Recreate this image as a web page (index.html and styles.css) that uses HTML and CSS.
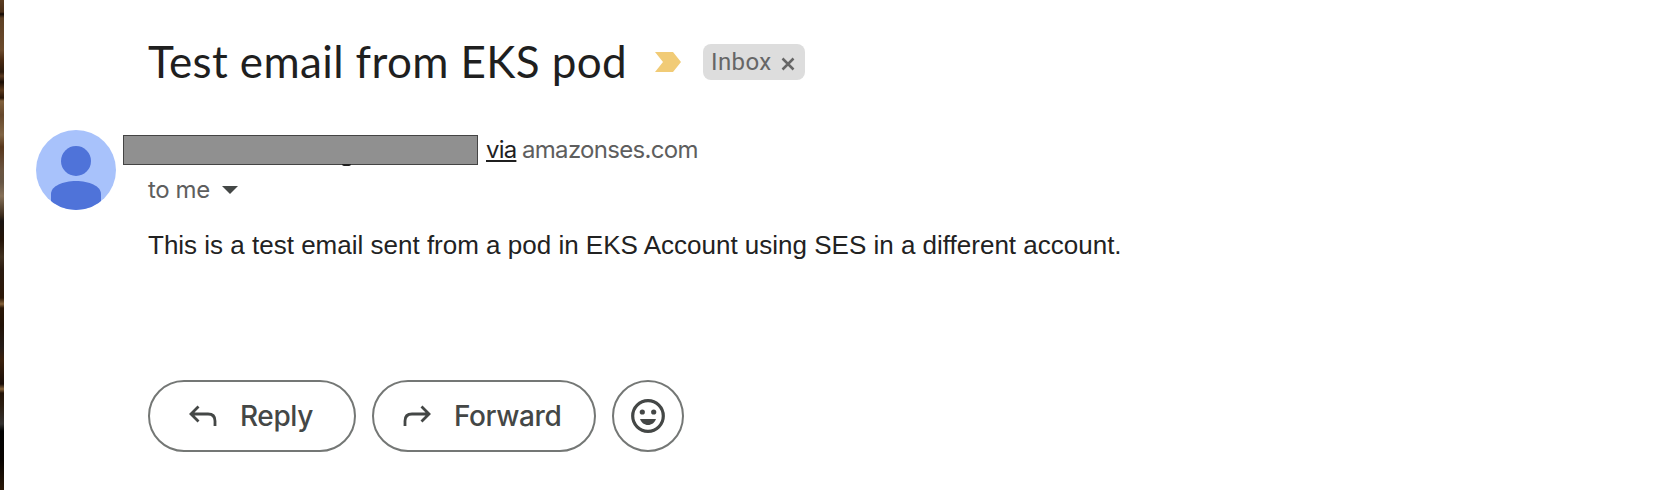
FILE: index.html
```html
<!DOCTYPE html>
<html lang="en">
<head>
<meta charset="utf-8">
<title>Test email from EKS pod</title>
<link rel="stylesheet" href="styles.css">
</head>
<body>
<div class="app">
  <div class="wallpaper"></div>
  <main class="message">
    <header class="subject-row">
      <h1 class="subject">Test email from EKS pod</h1>
      <svg class="important" width="26" height="20" viewBox="0 0 26 20"><path d="M0 0H18L26 10L18 20H0L8 10Z" fill="#f1cb76"/></svg>
      <span class="label"><span class="label-text">Inbox</span><svg width="14" height="14" viewBox="0 0 14 14"><path d="M1.500 1.500L12.500 12.500M12.500 1.500L1.500 12.500" stroke="#666" stroke-width="2.5"/></svg></span>
    </header>
    <section class="sender">
      <svg class="avatar" width="80" height="80" viewBox="0 0 80 80">
        <defs><clipPath id="disc"><circle cx="40" cy="40" r="40"/></clipPath></defs>
        <circle cx="40" cy="40" r="40" fill="#a8c2fb"/>
        <circle cx="40" cy="31" r="15" fill="#4f73d9"/>
        <path clip-path="url(#disc)" d="M15 80V64C15 56 27 51 40 51S65 56 65 64V80Z" fill="#4f73d9"/>
      </svg>
      <div class="sender-info">
        <div class="from-row">
          <span class="redacted"></span>
          <a class="via">via</a>
          <span class="domain">amazonses.com</span>
        </div>
        <div class="to-row">
          <span class="to">to me</span>
          <svg width="16" height="8" viewBox="0 0 16 8"><path d="M0 0H16L8 8Z" fill="#444746"/></svg>
        </div>
      </div>
    </section>
    <p class="body-text">This is a test email sent from a pod in EKS Account using SES in a different account.</p>
    <div class="actions">
      <button class="pill reply">
        <svg width="28" height="22" viewBox="0 0 28 22"><path d="M9.500 1.500L2 9L9.500 16.500M2 9H19Q26 9 26 16V21" fill="none" stroke="#444746" stroke-width="2.8"/></svg>
        <span class="reply-text">Reply</span>
      </button>
      <button class="pill forward">
        <svg width="28" height="22" viewBox="0 0 28 22"><path d="M18.500 1.500L26 9L18.500 16.500M26 9H9Q2 9 2 16V21" fill="none" stroke="#444746" stroke-width="2.8"/></svg>
        <span class="forward-text">Forward</span>
      </button>
      <button class="pill emoji" aria-label="Add reaction">
        <svg width="34" height="34" viewBox="0 0 34 34"><circle cx="17" cy="17" r="15.3" fill="none" stroke="#444746" stroke-width="3.2"/><circle cx="11.3" cy="13" r="2.6" fill="#444746"/><circle cx="22.7" cy="13" r="2.600" fill="#444746"/><path d="M9 20H25C23.700 23.700 20.600 26 17 26S10.300 23.700 9 20Z" fill="#444746"/></svg>
      </button>
    </div>
  </main>
</div>
</body>
</html>
```
FILE: styles.css
```css
* { box-sizing: border-box; }
body {
  margin: 0;
  background: #fff;
  font-family: Inter, "Liberation Sans", sans-serif;
  overflow: hidden;
}
svg { display: block; flex: none; }
.app { display: flex; height: 490px; }
.wallpaper {
  width: 4px;
  flex: none;
  background: linear-gradient(#5a3c20 0, #4a2f18 12px, #120a04 14px, #5d4024 18px, #6b4a2c 50px, #4a2a12 60px, #2c1a0c 72px, #5a3a20 76px, #1a0e06 82px, #5a381c 90px, #2a1608 98px, #80603c 101px, #66482c 115px, #806444 135px, #58371c 147px, #6a5440 170px, #665544 182px, #857058 196px, #3a2a1c 216px, #1a1412 221px, #241408 240px, #40301f 257px, #2a1a10 270px, #2c1808 298px, #86623a 304px, #2a1606 308px, #221206 325px, #251c18 347px, #3a200c 360px, #1a0e08 384px, #86643c 389px, #241408 393px, #2a1c10 405px, #343230 424px, #020202 431px, #080401 460px, #2a1908 490px);
}
.message { flex: 1; min-width: 0; padding: 30px 0 0 32px; }
.subject-row { display: flex; align-items: center; height: 64px; padding-left: 112px; }
.subject {
  width: 507px;
  margin: 0;
  padding-bottom: 3px;
  font: 400 44px/60px Lato, sans-serif;
  letter-spacing: 0.38px;
  color: #1f1f1f;
  white-space: nowrap;
}
.label {
  display: flex;
  align-items: center;
  justify-content: space-between;
  width: 102px;
  height: 36px;
  margin-left: 22px;
  padding: 0 10px 0 8px;
  border-radius: 8px;
  background: #ddd;
  color: #666;
}
.label svg { margin-top: 3px; }
.label-text { font: 400 24px/36px Roboto, sans-serif; letter-spacing: 0.4px; }
.sender { display: flex; margin-top: 36px; }
.sender-info { padding: 1px 0 0 7px; }
.from-row { display: flex; height: 36px; align-items: center; font-size: 24px; line-height: 36px; white-space: nowrap; }
.redacted {
  position: relative;
  width: 355px;
  height: 30px;
  margin: 2px 8px 0 0;
  border: 1.5px solid #444;
  background: #909090;
}
.redacted::after {
  content: "";
  position: absolute;
  left: 218px;
  bottom: -2px;
  width: 9px;
  height: 2px;
  border-radius: 0 0 5px 5px;
  background: #1f1f1f;
}
.via { width: 36px; margin-top: 2px; letter-spacing: -0.8px; color: #1f1f1f; text-decoration: underline; text-decoration-thickness: 2px; text-underline-offset: 2px; }
.domain { margin-top: 2px; letter-spacing: -0.7px; color: #5e5e5e; }
.to-row { display: flex; align-items: center; height: 36px; margin: 5px 0 0 25px; color: #5e5e5e; font-size: 24px; line-height: 36px; }
.to { width: 74px; letter-spacing: -0.4px; white-space: nowrap; }
.body-text {
  margin: 19px 0 0 112px;
  font: 26px/32px "Liberation Sans", Arial, sans-serif;
  color: #222;
  white-space: nowrap;
}
.actions { display: flex; gap: 16px; margin: 119px 0 0 112px; }
.pill {
  display: flex;
  align-items: center;
  height: 72px;
  padding: 0;
  border: 2px solid #747775;
  border-radius: 36px;
  background: #fff;
  color: #444746;
  font: 500 28px/36px Inter, sans-serif;
  letter-spacing: -0.4px;
  white-space: nowrap;
}
.reply { width: 208px; padding-left: 39px; gap: 23px; }
.forward { width: 224px; padding-left: 29px; gap: 23px; }
.emoji { width: 72px; justify-content: center; }
```
